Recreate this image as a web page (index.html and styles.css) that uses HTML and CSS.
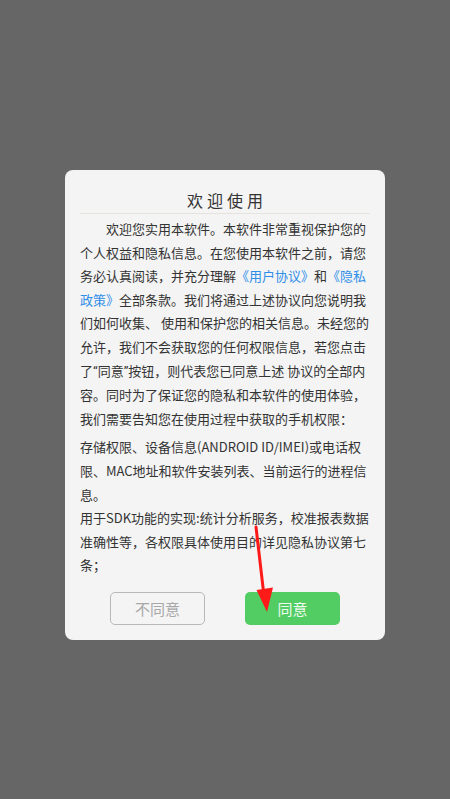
FILE: index.html
```html
<!DOCTYPE html>
<html lang="zh-CN">
<head>
    <meta charset="UTF-8">
    <meta name="viewport" content="width=device-width, initial-scale=1.0">
    <title>欢迎使用</title>
    <link rel="stylesheet" href="styles.css">
</head>
<body>
    <div class="screen">
        <div class="dialog">
            <div class="title">欢迎使用</div>
            <div class="content">
                <p class="intro">欢迎您实用本软件。本软件非常重视保护您的个人权益和隐私信息。在您使用本软件之前，请您务必认真阅读，并充分理解<span class="link">《用户协议》</span>和<span class="link">《隐私政策》</span>全部条款。我们将通过上述协议向您说明我们如何收集、 使用和保护您的相关信息。未经您的允许，我们不会获取您的任何权限信息，若您点击了<span class="q">“</span>同意<span class="q">”</span>按钮，则代表您已同意上述 协议的全部内容。同时为了保证您的隐私和本软件的使用体验，我们需要告知您在使用过程中获取的手机权限：</p>
                <p class="perms">存储权限、设备信息(ANDROID ID/IMEI)或电话权限、MAC地址和软件安装列表、当前运行的进程信息。<br>用于SDK功能的实现:统计分析服务，校准报表数据准确性等，各权限具体使用目的详见隐私协议第七条；</p>
            </div>
            <div class="actions">
                <button class="btn btn-cancel">不同意</button>
                <button class="btn btn-ok">同意</button>
            </div>
        </div>

        <!-- red pointer drawn on top of the dialog -->
        <svg class="arrow" width="450" height="799" viewBox="0 0 450 799">
            <line x1="256" y1="527" x2="264" y2="596" stroke="#ff1a1a" stroke-width="3" stroke-linecap="round"/>
            <polygon points="256.5,590 273,587.5 267,612" fill="#ff1a1a"/>
        </svg>
    </div>
</body>
</html>
```

FILE: styles.css
```css
body {
    margin: 0;
    background: #666666;
    font-family: "Noto Sans CJK SC", "Noto Sans", sans-serif;
}

.screen {
    position: relative;
    width: 450px;
    height: 799px;
    padding-top: 170px;
    box-sizing: border-box;
}

.dialog {
    width: 320px;
    margin: 0 auto;
    background: #f4f4f4;
    border-radius: 8px;
    padding: 0 15px 15px;
    box-sizing: border-box;
}

.title {
    font-size: 16px;
    letter-spacing: 4px;
    text-indent: 4px;
    line-height: 24px;
    color: #333333;
    text-align: center;
    padding: 18px 0 1px;
    border-bottom: 1px solid #e6e2de;
}

.content {
    padding-top: 3px;
    color: #333333;
    font-size: 13px;
    line-height: 23.6px;
}

.content p {
    margin: 0;
}

.intro {
    text-indent: 2em;
}

.perms {
    margin-top: 5px !important;
}

.link {
    color: #2f8ee8;
}

/* narrow latin quote marks, as on the device */
.q {
    font-family: Roboto, "Noto Sans", sans-serif;
}

.actions {
    display: flex;
    justify-content: center;
    gap: 40px;
    margin-top: 15px;
}

.btn {
    width: 95px;
    height: 33px;
    border-radius: 5px;
    font-family: inherit;
    font-size: 15px;
    padding: 0;
    cursor: pointer;
}

.btn-cancel {
    background: transparent;
    border: 1.5px solid #b8b8b8;
    color: #a8a8a8;
}

.btn-ok {
    background: #52cd63;
    border: none;
    color: #eefaef;
}

.arrow {
    position: absolute;
    left: 0;
    top: 0;
    pointer-events: none;
}
```
